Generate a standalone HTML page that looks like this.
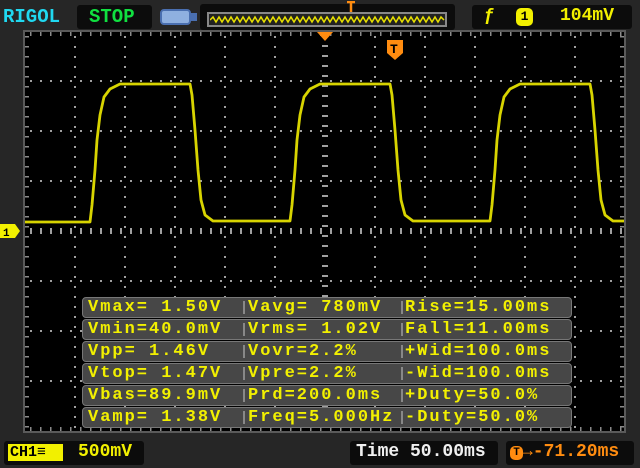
<!DOCTYPE html><html><head><style>
body{margin:0;width:640px;height:468px;background:#262626;overflow:hidden;position:relative;font-family:"Liberation Mono",monospace;font-weight:bold}
.b{position:absolute;background:#0c0c0c;border-radius:3px}
.t{position:absolute;white-space:pre}
.row{position:absolute;left:82px;width:488px;height:19px;background:#474747;border:1px solid #777;border-radius:4px}
.row span{position:absolute;top:0;font-size:17px;letter-spacing:2px;color:#f2f000;line-height:19px;white-space:pre}
.row i{position:absolute;top:3px;width:2px;height:13px;background:#888}
</style></head><body>
<div class="t" style="left:3px;top:6px;font-size:19px;color:#20d8f0">RIGOL</div>
<div class="b" style="left:77px;top:5px;width:75px;height:24px"></div>
<div class="t" style="left:89px;top:6px;font-size:19px;color:#10e040">STOP</div>
<div style="position:absolute;left:160px;top:9px;width:31px;height:16px;background:#8fb0e0;border:2px solid #4a6fb0;border-radius:4px;box-sizing:border-box"></div>
<div style="position:absolute;left:191px;top:13px;width:6px;height:8px;background:#4a6fb0"></div>
<div class="b" style="left:200px;top:4px;width:255px;height:26px"></div>
<div style="position:absolute;left:207px;top:12px;width:240px;height:15px;border:2px solid #888;box-sizing:border-box;background:#222"></div>
<svg style="position:absolute;left:210px;top:14px" width="236" height="11"><polyline fill="none" stroke="#e8e000" stroke-width="1.5" points="0,6 3,3 6,8 9,3 12,8 15,3 18,8 21,3 24,8 27,3 30,8 33,3 36,8 39,3 42,8 45,3 48,8 51,3 54,8 57,3 60,8 63,3 66,8 69,3 72,8 75,3 78,8 81,3 84,8 87,3 90,8 93,3 96,8 99,3 102,8 105,3 108,8 111,3 114,8 117,3 120,8 123,3 126,8 129,3 132,8 135,3 138,8 141,3 144,8 147,3 150,8 153,3 156,8 159,3 162,8 165,3 168,8 171,3 174,8 177,3 180,8 183,3 186,8 189,3 192,8 195,3 198,8 201,3 204,8 207,3 210,8 213,3 216,8 219,3 222,8 225,3 228,8 231,3 234,6"/></svg>
<svg style="position:absolute;left:346px;top:1px" width="10" height="11"><path d="M1,1H9M5,1V11" stroke="#ff8c10" stroke-width="2.5"/></svg>
<div class="b" style="left:472px;top:5px;width:160px;height:24px"></div>
<div class="t" style="left:484px;top:6px;font-size:18px;color:#f2f000">ƒ</div>
<div style="position:absolute;left:516px;top:8px;width:17px;height:18px;background:#f2f000;border-radius:5px;color:#000;font-size:13px;text-align:center;line-height:18px">1</div>
<div class="t" style="left:560px;top:6px;font-size:18px;color:#f2f000">104mV</div>
<svg style="position:absolute;left:0;top:0" width="640" height="468">
<rect x="24" y="31" width="601" height="401" fill="#000" stroke="#5a5a5a" stroke-width="2"/>
<g stroke="#a0a0a0" stroke-width="2" stroke-dasharray="2 8" fill="none">
<path d="M75,36V430M125,36V430M175,36V430M225,36V430M275,36V430M375,36V430M425,36V430M475,36V430M525,36V430M575,36V430"/>
<path d="M30,81H623M30,131H623M30,181H623M30,281H623M30,331H623M30,381H623"/>
</g>
<g stroke="#8a8a8a" fill="none">
<path d="M30,34H625M30,429H625" stroke-width="4" stroke-dasharray="1.5 8.5"/>
<path d="M27,36V431M622,36V431" stroke-width="4" stroke-dasharray="1.5 8.5"/>
</g>
<g stroke="#a0a0a0" fill="none">
<path d="M325,45V430" stroke-width="6" stroke-dasharray="2 8"/>
<path d="M30,231H622" stroke-width="6" stroke-dasharray="2 8"/>
</g>
<path fill="none" stroke="#d8d400" stroke-width="2.8" stroke-linejoin="round" d="M25,222H90L92,205L95,170L97,140L100,115L104,97L110,89L120,84H190L192,95L195,130L198,170L201,200L205,215L213,221H290L292,205L295,170L297,140L300,115L304,97L310,89L320,84H390L392,95L395,130L398,170L401,200L405,215L413,221H490L492,205L495,170L497,140L500,115L504,97L510,89L520,84H590L592,95L595,130L598,170L601,200L605,215L613,221H624"/>
<path d="M317,32h16l-8,9z" fill="#ff8c10"/>
<path d="M387,40h16v13l-8,7l-8,-7z" fill="#ff8c10"/>
<text x="390" y="53" font-family="Liberation Mono" font-weight="bold" font-size="13" fill="#000">T</text>
<path d="M0,224h15l5,7l-5,7h-15z" fill="#f2f000"/>
<text x="3" y="236" font-family="Liberation Mono" font-weight="bold" font-size="11" fill="#000">1</text>
</svg>
<div class="row" style="top:297px"><span style="left:5px">Vmax= 1.50V</span><i style="left:160px"></i><span style="left:165px">Vavg= 780mV</span><i style="left:318px"></i><span style="left:322px">Rise=15.00ms</span></div>
<div class="row" style="top:319px"><span style="left:5px">Vmin=40.0mV</span><i style="left:160px"></i><span style="left:165px">Vrms= 1.02V</span><i style="left:318px"></i><span style="left:322px">Fall=11.00ms</span></div>
<div class="row" style="top:341px"><span style="left:5px">Vpp= 1.46V</span><i style="left:160px"></i><span style="left:165px">Vovr=2.2%</span><i style="left:318px"></i><span style="left:322px">+Wid=100.0ms</span></div>
<div class="row" style="top:363px"><span style="left:5px">Vtop= 1.47V</span><i style="left:160px"></i><span style="left:165px">Vpre=2.2%</span><i style="left:318px"></i><span style="left:322px">-Wid=100.0ms</span></div>
<div class="row" style="top:385px"><span style="left:5px">Vbas=89.9mV</span><i style="left:160px"></i><span style="left:165px">Prd=200.0ms</span><i style="left:318px"></i><span style="left:322px">+Duty=50.0%</span></div>
<div class="row" style="top:407px"><span style="left:5px">Vamp= 1.38V</span><i style="left:160px"></i><span style="left:165px">Freq=5.000Hz</span><i style="left:318px"></i><span style="left:322px">-Duty=50.0%</span></div>
<div class="b" style="left:4px;top:441px;width:140px;height:24px"></div>
<div style="position:absolute;left:8px;top:444px;width:55px;height:17px;background:#f2f000;color:#000;font-size:15px;line-height:17px;padding-left:2px;box-sizing:border-box">CH1≡</div>
<div class="t" style="left:78px;top:442px;font-size:18px;color:#f2f000">500mV</div>
<div class="b" style="left:350px;top:441px;width:148px;height:24px"></div>
<div class="t" style="left:356px;top:442px;font-size:18px;color:#f0f0f0">Time 50.00ms</div>
<div class="b" style="left:506px;top:441px;width:128px;height:24px"></div>
<div style="position:absolute;left:510px;top:446px;width:13px;height:14px;background:#ff8c10;border-radius:5px;color:#000;font-size:11px;text-align:center;line-height:14px">T</div>
<div class="t" style="left:522px;top:442px;font-size:18px;color:#ff8c10">→-71.20ms</div>
</body></html>
